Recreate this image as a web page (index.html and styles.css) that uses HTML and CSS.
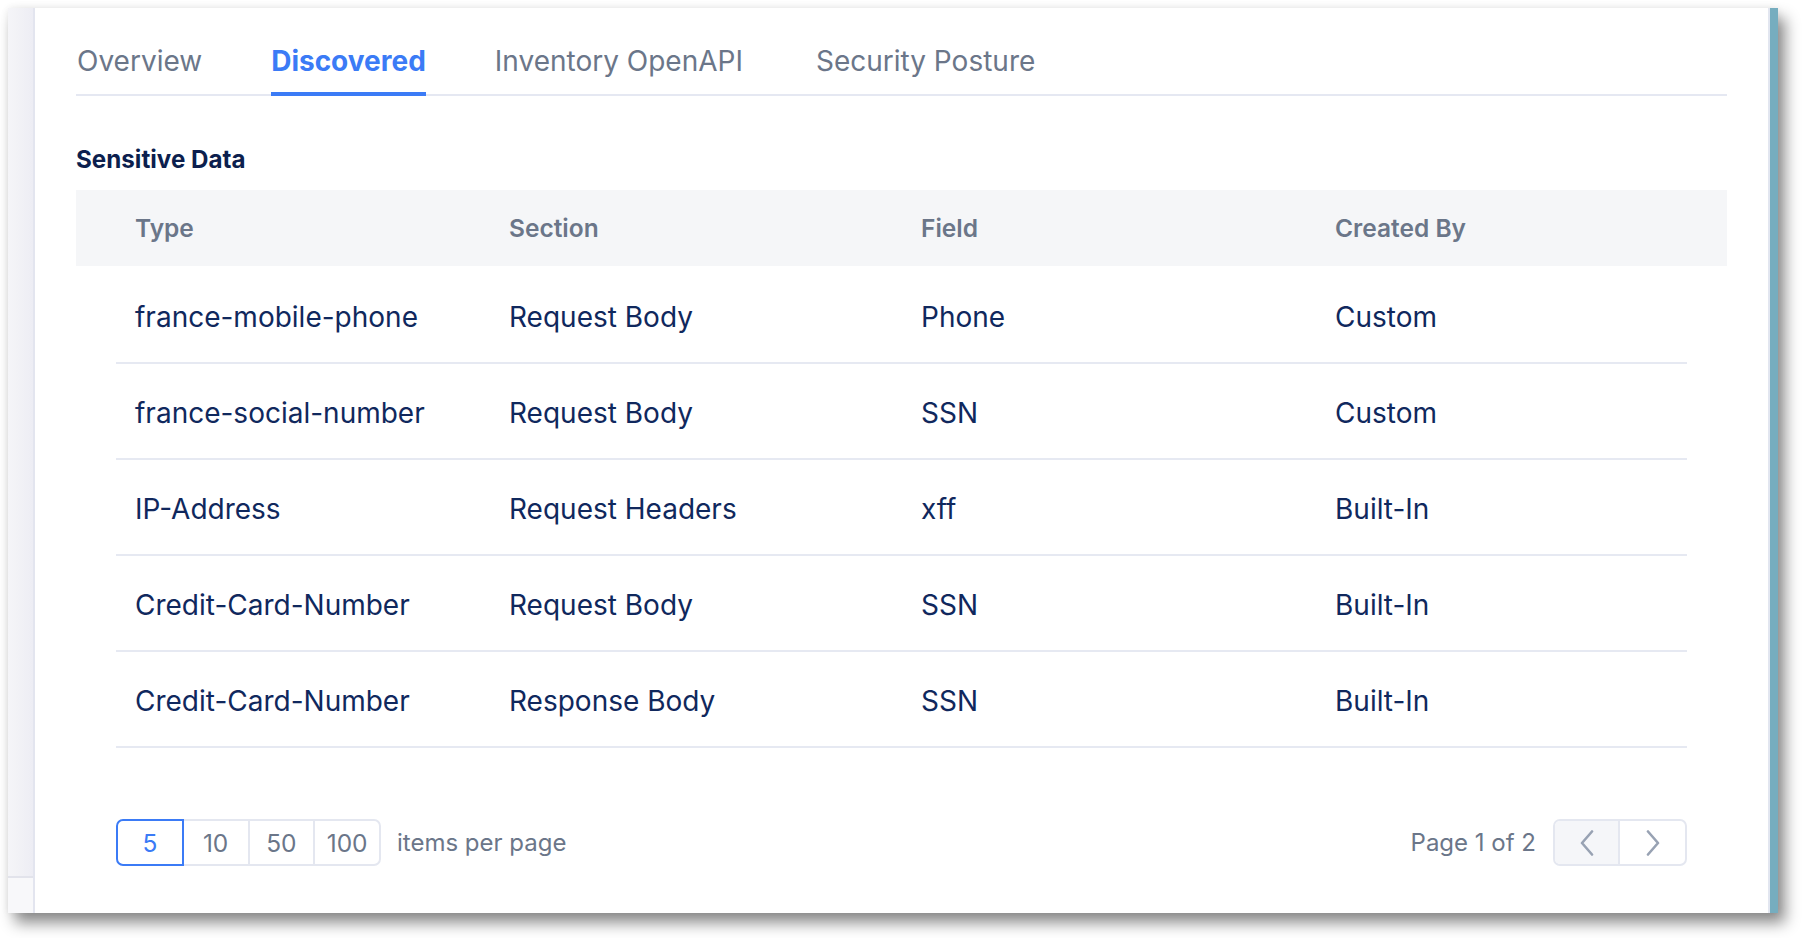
FILE: index.html
```html
<!DOCTYPE html>
<html lang="en">
<head>
<meta charset="utf-8">
<title>Discovered - Sensitive Data</title>
<link rel="stylesheet" href="styles.css">
</head>
<body>
<div class="window">
  <aside class="side">
    <div class="side-top"></div>
    <div class="side-bottom"></div>
  </aside>
  <main class="main">
    <nav class="tabs">
      <span class="tab">Overview</span>
      <span class="tab active">Discovered</span>
      <span class="tab">Inventory OpenAPI</span>
      <span class="tab last">Security Posture</span>
    </nav>
    <h2 class="title">Sensitive Data</h2>
    <div class="table">
      <div class="thead">
        <div class="cell">Type</div>
        <div class="cell">Section</div>
        <div class="cell">Field</div>
        <div class="cell">Created By</div>
      </div>
      <div class="tbody">
        <div class="row">
          <div class="cell">france-mobile-phone</div>
          <div class="cell">Request Body</div>
          <div class="cell">Phone</div>
          <div class="cell">Custom</div>
        </div>
        <div class="row">
          <div class="cell">france-social-number</div>
          <div class="cell">Request Body</div>
          <div class="cell">SSN</div>
          <div class="cell">Custom</div>
        </div>
        <div class="row">
          <div class="cell">IP-Address</div>
          <div class="cell">Request Headers</div>
          <div class="cell">xff</div>
          <div class="cell">Built-In</div>
        </div>
        <div class="row">
          <div class="cell">Credit-Card-Number</div>
          <div class="cell">Request Body</div>
          <div class="cell">SSN</div>
          <div class="cell">Built-In</div>
        </div>
        <div class="row">
          <div class="cell">Credit-Card-Number</div>
          <div class="cell">Response Body</div>
          <div class="cell">SSN</div>
          <div class="cell">Built-In</div>
        </div>
      </div>
      <div class="pager">
        <div class="pager-left">
          <div class="sizes">
            <span class="size active">5</span>
            <span class="size">10</span>
            <span class="size">50</span>
            <span class="size">100</span>
          </div>
          <span class="pager-label">items per page</span>
        </div>
        <div class="pager-right">
          <span class="pager-label">Page 1 of 2</span>
          <div class="nav">
            <span class="nav-btn prev">
              <svg width="14" height="26" viewBox="0 0 14 26" aria-hidden="true"><path d="M12 1.5 L2 13 L12 24.5" fill="none" stroke="#98a2b3" stroke-width="2.6" stroke-linecap="round" stroke-linejoin="round"/></svg>
            </span>
            <span class="nav-btn next">
              <svg width="14" height="26" viewBox="0 0 14 26" aria-hidden="true"><path d="M2 1.5 L12 13 L2 24.5" fill="none" stroke="#98a2b3" stroke-width="2.6" stroke-linecap="round" stroke-linejoin="round"/></svg>
            </span>
          </div>
        </div>
      </div>
    </div>
  </main>
  <div class="scroll"></div>
</div>
</body>
</html>
```

FILE: styles.css
```css
* { box-sizing: border-box; }

html, body { margin: 0; }

html { background: #ffffff; }

body {
  min-height: 938px;
  padding: 8px 0 0 8px;
  font-family: Inter, "Noto Sans", "Liberation Sans", sans-serif;
  -webkit-font-smoothing: antialiased;
}

.window {
  display: flex;
  width: 1770px;
  height: 905px;
  background: #ffffff;
  box-shadow: 0 0 8px rgba(0, 0, 0, 0.07), 7px 10px 14px rgba(0, 0, 0, 0.45);
}

.side {
  width: 27px;
  display: flex;
  flex-direction: column;
  border-right: 2px solid #e3e5ef;
}

.side-top {
  flex: 1;
  background: linear-gradient(90deg, #f5f5f8 0%, #f2f2f6 40%, #ededf4 100%);
  border-bottom: 2px solid #e2e3eb;
}

.side-bottom {
  height: 35px;
  background: #f8f8fa;
}

.main {
  flex: 1;
  padding: 36px 41px 0 41px;
}

.scroll {
  width: 10px;
  border-left: 2px solid #e2e6f0;
  background: #76adbf;
}

/* Tabs */
.tabs {
  display: flex;
  gap: 69px;
  padding-left: 1px;
  border-bottom: 2px solid #e5e8f2;
}

.tab {
  font-size: 28px;
  line-height: 34px;
  color: #6b7689;
  padding-bottom: 14px;
  border-bottom: 4px solid transparent;
  margin-bottom: -2px;
  white-space: nowrap;
}

.tab.last {
  margin-left: 4px;
}

.tab.active {
  color: #3b7bf6;
  font-weight: 700;
  border-bottom-color: #3b7bf6;
}

/* Title */
.title {
  margin: 49px 0 16px;
  font-size: 24.2px;
  line-height: 29px;
  font-weight: 700;
  color: #0c1f4e;
}

/* Table */
.thead,
.row {
  display: grid;
  grid-template-columns: 374px 412px 414px 1fr;
  align-items: center;
}

.thead {
  height: 76px;
  padding: 0 40px;
  background: #f5f6f8;
}

.thead .cell {
  padding-left: 19px;
  font-size: 24.5px;
  font-weight: 600;
  color: #6b7689;
}

.tbody {
  margin: 0 40px;
  padding-top: 2px;
}

.row {
  height: 96px;
  border-bottom: 2px solid #e6e9f2;
}

.row .cell {
  padding: 3px 0 0 19px;
  font-size: 28px;
  color: #10285d;
  white-space: nowrap;
}

/* Pager */
.pager {
  margin: 71px 40px 0;
  display: flex;
  align-items: center;
  justify-content: space-between;
}

.pager-left,
.pager-right {
  display: flex;
  align-items: center;
}

.pager-label {
  font-size: 24px;
  color: #6b7689;
}

.pager-left .pager-label { margin-left: 16px; }
.pager-right .pager-label { margin-right: 17px; }

.sizes {
  display: flex;
}

.size {
  width: 67.75px;
  height: 47px;
  display: flex;
  align-items: center;
  justify-content: center;
  font-size: 24.5px;
  color: #6b7689;
  border: 2px solid #e4e7f0;
  margin-left: -2px;
  background: #ffffff;
}

.size:first-child {
  margin-left: 0;
  border-radius: 7px 0 0 7px;
}

.size:last-child {
  border-radius: 0 7px 7px 0;
}

.size.active {
  color: #3b7bf6;
  border-color: #3b7bf6;
  z-index: 1;
}

.nav {
  display: flex;
  border: 2px solid #e4e7f0;
  border-radius: 7px;
  overflow: hidden;
}

.nav-btn {
  width: 65px;
  height: 43px;
  display: flex;
  align-items: center;
  justify-content: center;
}

.nav-btn.prev {
  background: #f5f6f9;
  border-right: 2px solid #e4e7f0;
}
```
